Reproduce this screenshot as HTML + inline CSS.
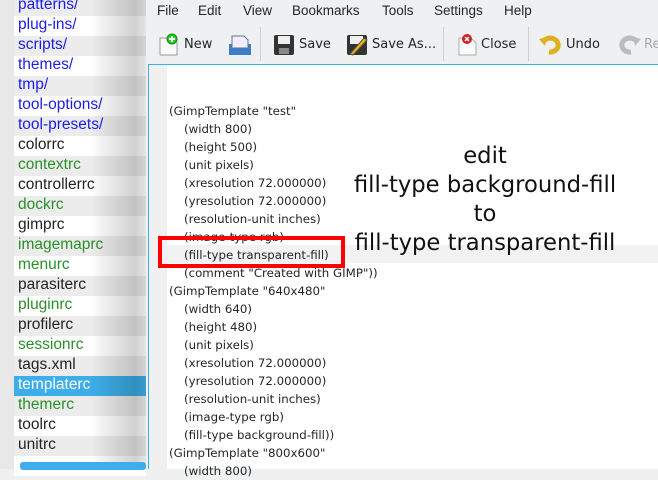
<!DOCTYPE html><html><head><style>
*{margin:0;padding:0;box-sizing:border-box}
body{width:658px;height:469px;overflow:hidden;background:#eff0f1;position:relative;font-family:"DejaVu Sans","Liberation Sans",sans-serif}
#left{position:absolute;left:0;top:0;width:146px;height:469px;background:#e8e8e8}
#list{position:absolute;left:14px;top:-4px;width:132px}
.r{height:20px;line-height:22px;font:15.5px "Liberation Sans",sans-serif;padding-left:4px;background:#fff;color:#222;position:relative}
.r:nth-child(odd){background:#ececec}
.b{color:#1c1ce8}.g{color:#2a8f2a}
.r.sel{background:#3daee9;color:#fff}
#shade{position:absolute;left:90px;top:0;width:56px;height:469px;background:linear-gradient(to right,rgba(0,0,0,0),rgba(0,0,0,.18) 80%,rgba(0,0,0,.1))}
#scroll{position:absolute;left:20px;top:462px;width:126px;height:8px;background:#3daee9;border-radius:3px}
#menu{position:absolute;left:0;top:3px;font:13.5px "Liberation Sans",sans-serif;color:#232627}
#menu span{position:absolute;white-space:nowrap}
#tb{position:absolute;left:146px;top:22px;width:512px;height:42px;font-size:13px;color:#232627}
.t{position:absolute;top:15px}
.sep{position:absolute;top:5px;width:1px;height:34px;background:#cfd0d1}
#ed{position:absolute;left:148px;top:64px;width:510px;height:405px;background:#fff;border:1px solid #3daee9;border-right:none;border-bottom:none}
#gut{position:absolute;left:0;top:0;width:18px;height:405px;background:#f0f0f0}
#cur{position:absolute;left:18px;top:180px;width:492px;height:18px;background:#f2f2f2}
#code{position:absolute;left:20px;top:37px;font-size:11.8px;line-height:18px;color:#232627;white-space:pre}
#big{position:absolute;left:315px;top:142px;width:340px;text-align:center;font-size:22.7px;line-height:29px;color:#111}
#red{position:absolute;left:158px;top:236px;width:187px;height:32px;border:4px solid #f00}
</style></head><body>
<div id="left"><div id="list">
<div class="r b">patterns/</div><div class="r b">plug-ins/</div><div class="r b">scripts/</div><div class="r b">themes/</div><div class="r b">tmp/</div><div class="r b">tool-options/</div><div class="r b">tool-presets/</div><div class="r">colorrc</div><div class="r g">contextrc</div><div class="r">controllerrc</div><div class="r g">dockrc</div><div class="r">gimprc</div><div class="r g">imagemaprc</div><div class="r g">menurc</div><div class="r">parasiterc</div><div class="r g">pluginrc</div><div class="r">profilerc</div><div class="r g">sessionrc</div><div class="r">tags.xml</div><div class="r sel">templaterc</div><div class="r g">themerc</div><div class="r">toolrc</div><div class="r">unitrc</div><div class="r"></div>
</div><div id="shade"></div><div id="scroll"></div></div>
<div id="menu"><span style="left:157px">File</span><span style="left:198px">Edit</span><span style="left:243px">View</span><span style="left:292px">Bookmarks</span><span style="left:382px">Tools</span><span style="left:434px">Settings</span><span style="left:504px">Help</span></div>
<div id="tb">
<svg style="position:absolute;left:11px;top:11px" width="24" height="24"><path d="M3 5h12l5 5v12H3z" fill="#fafafa" stroke="#999"/><circle cx="15" cy="6" r="5" fill="#2c2" stroke="#181"/><path d="M15 3v6M12 6h6" stroke="#fff" stroke-width="2"/></svg>
<span class="t" style="left:38px">New</span>
<svg style="position:absolute;left:82px;top:12px" width="24" height="22"><path d="M1 10h22v11H1z" fill="#3b7ed0"/><path d="M4 2h12l4 4v8H4z" fill="#eef" stroke="#678"/></svg>
<div class="sep" style="left:114px"></div>
<svg style="position:absolute;left:127px;top:12px" width="22" height="22"><rect x="1" y="1" width="20" height="20" rx="2" fill="#333"/><rect x="5" y="2" width="12" height="8" fill="#eee"/><rect x="6" y="14" width="10" height="6" fill="#888"/></svg>
<span class="t" style="left:153px">Save</span>
<svg style="position:absolute;left:200px;top:12px" width="22" height="22"><rect x="1" y="1" width="20" height="20" rx="2" fill="#333"/><rect x="4" y="2" width="13" height="8" fill="#eee"/><path d="M4 20L18 4l3 2L7 21z" fill="#e8b020" stroke="#553"/></svg>
<span class="t" style="left:226px">Save As...</span>
<div class="sep" style="left:297px"></div>
<svg style="position:absolute;left:310px;top:11px" width="22" height="24"><path d="M3 5h12l5 5v12H3z" fill="#fafafa" stroke="#aaa"/><circle cx="11" cy="6" r="5" fill="#c22"/><path d="M9 4l4 4M13 4l-4 4" stroke="#fff" stroke-width="1.5"/></svg>
<span class="t" style="left:335px">Close</span>
<div class="sep" style="left:382px"></div>
<svg style="position:absolute;left:393px;top:11px" width="24" height="22"><path d="M4 9a8 7 0 1 1 6 10" fill="none" stroke="#e0b020" stroke-width="5"/><path d="M0 6l8-2-2 9z" fill="#e0b020"/></svg>
<span class="t" style="left:420px">Undo</span>
<svg style="position:absolute;left:471px;top:11px" width="24" height="22"><path d="M20 9a8 7 0 1 0 -6 10" fill="none" stroke="#bbb" stroke-width="5"/><path d="M24 6l-8-2 2 9z" fill="#bbb"/></svg>
<span class="t" style="left:498px;color:#aaa">Re</span>
</div>
<div id="ed"><div id="gut"></div><div id="cur"></div>
<div id="code">(GimpTemplate "test"
    (width 800)
    (height 500)
    (unit pixels)
    (xresolution 72.000000)
    (yresolution 72.000000)
    (resolution-unit inches)
    (image-type rgb)
    (fill-type transparent-fill)
    (comment "Created with GIMP"))
(GimpTemplate "640x480"
    (width 640)
    (height 480)
    (unit pixels)
    (xresolution 72.000000)
    (yresolution 72.000000)
    (resolution-unit inches)
    (image-type rgb)
    (fill-type background-fill))
(GimpTemplate "800x600"
    (width 800)</div></div>
<div id="big">edit<br>fill-type background-fill<br>to<br>fill-type transparent-fill</div>
<div id="red"></div>
</body></html>
